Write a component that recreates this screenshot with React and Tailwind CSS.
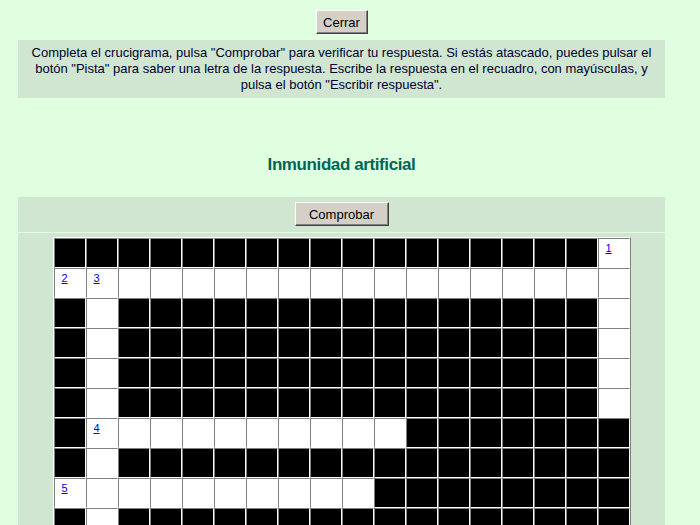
import React from "react";

// crossword layout: '#' blank cell, '.' letter cell, digit = numbered cell
const grid = [
  "#################1",
  "23................",
  "#.###############.",
  "#.###############.",
  "#.###############.",
  "#.###############.",
  "#4.........#######",
  "#.################",
  "5.........########",
  "#.################",
  "#.################",
];

const btn =
  "h-[24px] bg-[#d4d0c8] border border-t-white border-l-white border-r-[#404040] border-b-[#404040] shadow-[inset_-1px_-1px_0_#808080] text-[13px] text-black leading-none";

function Cell({ ch }) {
  const blank = ch === "#";
  const num = /[0-9]/.test(ch);
  return (
    <div
      className={`w-[32px] h-[30px] border border-t-[#808080] border-l-[#808080] border-r-white border-b-white ${
        blank ? "bg-black" : "bg-white"
      }`}
    >
      {num && (
        <a
          href="#"
          className="block pl-[7px] pt-[3px] text-[11px] leading-[12px] text-[#0000ee] underline"
        >
          {ch}
        </a>
      )}
    </div>
  );
}

export default function App() {
  return (
    <div className="min-h-screen w-full bg-[#e0ffe0] font-['Liberation_Sans',Arial,sans-serif]">
      <div className="w-[683px] pt-[10px] flex flex-col items-center">
        <button className={`${btn} w-[52px]`}>Cerrar</button>

        <div className="mt-[6px] w-[647px] bg-[#d0e6d0] py-[5px] px-[4px] text-center text-[13px] leading-[16px] text-[#000033]">
          Completa el crucigrama, pulsa "Comprobar" para verificar tu respuesta. Si estás atascado, puedes pulsar el
          <br />
          botón "Pista" para saber una letra de la respuesta. Escribe la respuesta en el recuadro, con mayúsculas, y
          <br />
          pulsa el botón "Escribir respuesta".
        </div>

        <h2 className="mt-[57px] text-[17px] leading-[20px] font-bold text-[#006655] tracking-[-0.4px]">
          Inmunidad artificial
        </h2>

        <div className="mt-[22px] w-[647px] bg-[#d0e6d0] pt-[5px] pb-[6px] flex justify-center">
          <button className={`${btn} w-[94px]`}>Comprobar</button>
        </div>

        <div className="mt-[1px] w-[647px] bg-[#d0e6d0] pt-[4px] pb-[12px] flex justify-center">
          <div className="border border-t-white border-l-white border-r-[#808080] border-b-[#808080]">
            {grid.map((row, r) => (
              <div key={r} className="flex">
                {row.split("").map((ch, c) => (
                  <Cell key={c} ch={ch} />
                ))}
              </div>
            ))}
          </div>
        </div>
      </div>
    </div>
  );
}
